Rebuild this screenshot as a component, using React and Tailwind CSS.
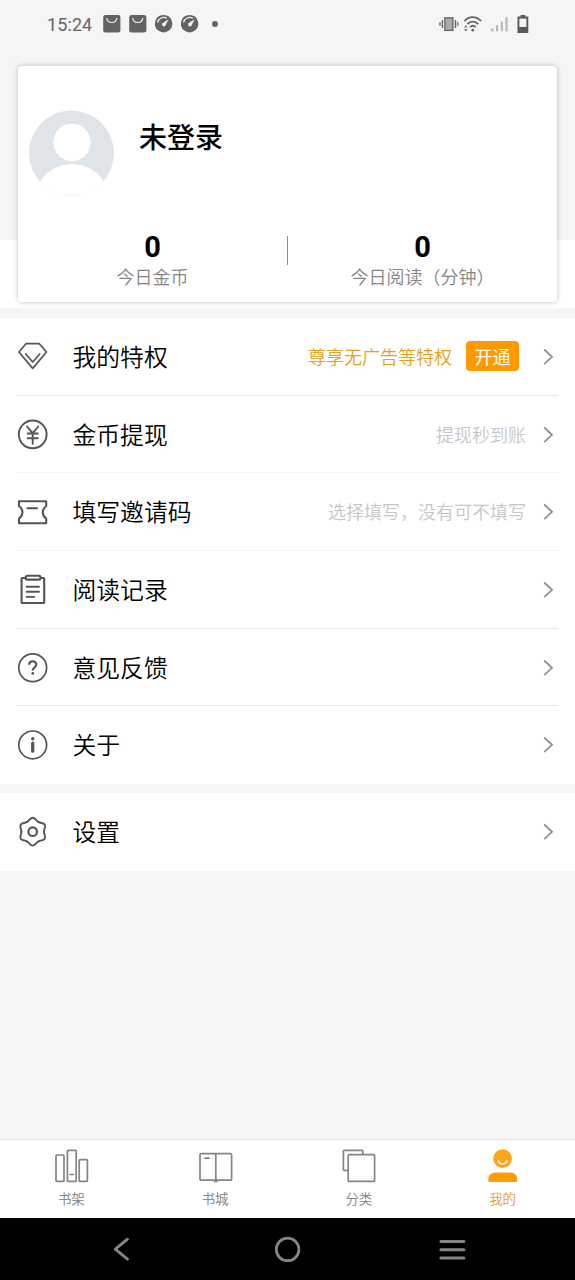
import clsx from "clsx";

const menuItems = [
    { label: "我的特权", icon: <DiamondIcon />, promo: "尊享无广告等特权", action: "开通" },
    { label: "金币提现", icon: <YenIcon />, hint: "提现秒到账", faint: true },
    { label: "填写邀请码", icon: <TicketIcon />, hint: "选择填写，没有可不填写", faint: true },
    { label: "阅读记录", icon: <ClipboardIcon /> },
    { label: "意见反馈", icon: <QuestionIcon /> },
    { label: "关于", icon: <InfoIcon /> },
];

const tabs = [
    { label: "书架", icon: <ShelfIcon /> },
    { label: "书城", icon: <BookIcon /> },
    { label: "分类", icon: <CategoryIcon /> },
    { label: "我的", icon: <MeIcon />, active: true },
];

/* Menu icons, all on a 32px box */
function MenuSvg({ children }) {
    return (
        <svg className="h-8 w-8 shrink-0" viewBox="0 0 32 32" fill="none" stroke="#555" strokeWidth="1.9" strokeLinejoin="round" strokeLinecap="round">
            {children}
        </svg>
    );
}

function DiamondIcon() {
    return (
        <MenuSvg>
            <path d="M9 2.7H22.3L29.5 11L15.7 27.4L1.9 11Z" strokeWidth="1.7" />
            <path d="M8.7 13L15.7 21L22.7 13" strokeWidth="1.7" />
        </MenuSvg>
    );
}

function YenIcon() {
    return (
        <MenuSvg>
            <circle cx="15.7" cy="15.4" r="13.9" />
            <path d="M10 7.5L15.7 14.2L21.4 7.5M15.7 14.2V24.7M10.7 14.5H20.9M10.7 19.2H20.9" />
        </MenuSvg>
    );
}

function TicketIcon() {
    return (
        <MenuSvg>
            <path d="M2 5.2H29.2V10C24.6 13.2 24.6 19.4 29.2 22.6V27.2H2V22.6C6.6 19.4 6.6 13.2 2 10Z" strokeWidth="2.1" />
            <path d="M10.4 12.3H20" strokeWidth="2.1" />
        </MenuSvg>
    );
}

function ClipboardIcon() {
    return (
        <MenuSvg>
            <path d="M8.7 4H5.4Q4.6 4 4.6 4.8V28.2Q4.6 29 5.4 29H26.4Q27.2 29 27.2 28.2V4.8Q27.2 4 26.4 4H23.5" strokeWidth="2.1" />
            <rect x="8.7" y="1.8" width="14.8" height="3.8" rx="1.6" strokeWidth="2.1" />
            <path d="M9.6 12.7H22M9.6 17.7H22M9.6 22.9H17.3" />
        </MenuSvg>
    );
}

function QuestionIcon() {
    return (
        <MenuSvg>
            <circle cx="15.7" cy="15.7" r="13.9" strokeWidth="1.7" />
            <path d="M12.1 12.8C12.1 8.2 19.3 8.2 19.3 12.6C19.3 15.2 15.8 15.4 15.8 18.6" strokeWidth="2.1" strokeLinecap="butt" />
            <circle cx="15.8" cy="21.4" r="1.4" fill="#555" stroke="none" />
        </MenuSvg>
    );
}

function InfoIcon() {
    return (
        <MenuSvg>
            <circle cx="15.7" cy="15.9" r="13.9" strokeWidth="1.7" />
            <circle cx="15.7" cy="9.8" r="1.7" fill="#555" stroke="none" />
            <path d="M15.7 14V22.2" strokeWidth="3.2" />
        </MenuSvg>
    );
}

function GearIcon() {
    return (
        <MenuSvg>
            {[0, 60, 120, 180, 240, 300].map((angle) => (
                <path key={angle} d="M10.05 5.9C12.7 4.4 13.2 1.8 15.7 1.8S18.7 4.4 21.35 5.9" transform={`rotate(${angle} 15.7 15.7)`} />
            ))}
            <circle cx="15.7" cy="15.7" r="4.3" strokeWidth="2.2" />
        </MenuSvg>
    );
}

/* Tab icons, 36px box */
function TabSvg({ children }) {
    return (
        <svg className="h-9 w-9" viewBox="0 0 36 36" fill="none" stroke="#858585" strokeWidth="1.7" strokeLinejoin="round" strokeLinecap="round">
            {children}
        </svg>
    );
}

function ShelfIcon() {
    return (
        <TabSvg>
            <rect x="2" y="7" width="8" height="26.4" rx="1" />
            <rect x="13.4" y="2.3" width="8.8" height="31.1" rx="1" />
            <rect x="25.2" y="11.6" width="8.2" height="21.8" rx="1" />
            <path d="M16 26.5H19.6" />
        </TabSvg>
    );
}

function BookIcon() {
    return (
        <TabSvg>
            <rect x="2" y="5.7" width="31.6" height="26.5" rx="1" />
            <path d="M17.8 6V33.2M7 10.2H11" />
            <path d="M16.6 33.4H19" />
        </TabSvg>
    );
}

function CategoryIcon() {
    return (
        <TabSvg>
            <path d="M6.6 22.3H3.4Q2.4 22.3 2.4 21.3V3.3Q2.4 2.3 3.4 2.3H20.8Q21.8 2.3 21.8 3.3V6" />
            <rect x="7.2" y="6.7" width="26.4" height="26.7" rx="1" />
        </TabSvg>
    );
}

function MeIcon() {
    return (
        <TabSvg>
            <circle cx="17.6" cy="10.6" r="9.3" fill="#fba41c" stroke="none" />
            <path d="M13.4 12.7C14.8 17 20.6 17 22 12.7" stroke="#fff" strokeWidth="1.5" />
            <path d="M3.4 34V31.8Q3.4 24.6 11 24.6H24.8Q32.2 24.6 32.2 31.8V34Z" fill="#ff9b09" stroke="none" />
        </TabSvg>
    );
}

function Chevron() {
    return (
        <svg className="ml-[17px] h-5 w-[11px] shrink-0" viewBox="0 0 11 20" fill="none" stroke="#929292" strokeWidth="1.8">
            <path d="M1.2 2.5L9 9.8L1.2 17.1" />
        </svg>
    );
}

function BagIcon() {
    return (
        <svg className="h-[18px] w-[18px]" viewBox="0 0 18 18" fill="none">
            <rect x="0.2" y="0" width="17.2" height="17.6" rx="2.4" fill="#636363" />
            <path d="M3.8 3C4.4 9 13.2 9 13.8 3" stroke="#f5f5f5" strokeWidth="1.2" />
        </svg>
    );
}

function GaugeIcon() {
    return (
        <svg className="h-[18px] w-[18px]" viewBox="0 0 18 18" fill="none">
            <path d="M8.6 0A8.7 8.7 0 0 1 13.1 16.1Q8.6 18.8 4.1 16.1A8.7 8.7 0 0 1 8.6 0Z" fill="#636363" />
            <path d="M2.6 7.6A6.3 6.3 0 0 1 11.8 3.1" stroke="#f5f5f5" strokeWidth="1.2" />
            <path d="M13.6 4.2L10.2 11A2 2 0 0 1 7.2 8.6Z" fill="#f5f5f5" />
        </svg>
    );
}

function StatusBar() {
    return (
        <div className="flex h-12 items-center pl-[47px] pr-[46px]">
            <span className="w-[55.5px] text-[18px] tracking-[0.1px] text-[#666] font-[Roboto,sans-serif]">15:24</span>
            <div className="flex items-center gap-2">
                <BagIcon />
                <BagIcon />
                <GaugeIcon />
                <GaugeIcon />
            </div>
            <span className="ml-[13.5px] h-[6px] w-[6px] rounded-full bg-[#636363]" />

            <div className="ml-auto flex items-center pb-px">
                {/* vibrate */}
                <svg className="h-5 w-5" viewBox="0 0 20 20" fill="none" stroke="#666">
                    <rect x="5.8" y="3.8" width="8.2" height="12.6" fill="#aaa" strokeWidth="1.3" />
                    <path d="M3.4 6V14M16.5 6V14" strokeWidth="1.4" />
                    <path d="M1 8V12M18.9 8V12" strokeWidth="1.2" />
                </svg>
                {/* wifi */}
                <svg className="ml-[3.5px] h-5 w-5" viewBox="0 0 20 20" fill="none" stroke="#666">
                    <path d="M1.4 7.2C6 1.8 13.4 1.8 18 7.2" strokeWidth="1.9" />
                    <path d="M4.4 10.2C7.4 6.8 12 6.8 15.2 10.2" strokeWidth="1.9" />
                    <path d="M7 13.2C8.6 11.6 11 11.6 12.7 13.2" strokeWidth="1.8" />
                    <circle cx="9.8" cy="16.2" r="1.4" fill="#666" stroke="none" />
                    <path d="M1 13.6L2.8 11.2L4.6 13.6ZM1 15.2L2.8 17.6L4.6 15.2Z" fill="#666" stroke="none" />
                </svg>
                {/* signal */}
                <svg className="ml-[8px] h-5 w-[17px]" viewBox="0 0 17 20" fill="#b8b8b8">
                    <path d="M0.2 14.6h2.3v2.6h-2.3zM5 10.9h2.1v6.3h-2.1zM9.8 7.4h2.1v9.8h-2.1zM14.4 3.2h2.2v14h-2.2z" />
                </svg>
                {/* battery */}
                <svg className="mr-[0.5px] ml-[9px] h-5 w-3" viewBox="0 0 12 20">
                    <path d="M3.6 1H8.4V2.6H11.3V19H0.5V2.6H3.6Z" fill="#5a5a5a" />
                    <rect x="2.4" y="4.6" width="7" height="8.4" fill="#f5f5f5" />
                </svg>
            </div>
        </div>
    );
}

function Stat({ value, label }) {
    return (
        <div className="flex flex-1 flex-col items-center">
            <span className="h-[29px] text-[29px] leading-[31px] font-bold font-[Roboto,sans-serif]">{value}</span>
            <span className="text-[18px] leading-[30px] text-[#858585] font-[350]">{label}</span>
        </div>
    );
}

function ProfileCard() {
    return (
        <div className="mx-[18px] mt-[18px] flex h-[236px] flex-col rounded-[4px] bg-white shadow-[0_0_5px_rgba(0,0,0,0.25)]">
            <div className="flex flex-1 items-start pl-[11px] pt-11">
                <svg className="h-[86px] w-[86px]" viewBox="0 0 86 86">
                    <defs>
                        <clipPath id="avatar">
                            <circle cx="42.5" cy="43" r="42.5" />
                        </clipPath>
                    </defs>
                    <g clipPath="url(#avatar)">
                        <rect width="86" height="86" fill="#dfe4e8" />
                        <circle cx="43" cy="32.5" r="18.7" fill="#fff" />
                        <path d="M8 78C20 46 66 46 78 78L70 84.5H16Z" fill="#fff" />
                        <rect y="71.5" width="86" height="13" fill="#fff" />
                    </g>
                </svg>
                <span className="ml-[24px] mt-[6px] text-[28px] leading-10 font-medium">未登录</span>
            </div>
            <div className="flex h-[70px] items-start">
                <Stat value="0" label="今日金币" />
                <span className="mt-[4px] h-[29px] w-px bg-[#8a8a8a]" />
                <Stat value="0" label="今日阅读（分钟）" />
            </div>
        </div>
    );
}

function MenuRow({ item, last }) {
    return (
        <div className="relative flex flex-1 items-center pl-[17px] pr-[21px]">
            {item.icon}
            <span className="ml-[23.5px] pb-[2px] text-[23.8px] leading-8 font-[350]">{item.label}</span>
            <div className="ml-auto flex items-center">
                {item.promo && <span className="pb-px text-[18px] font-[350] text-[#e8a018]">{item.promo}</span>}
                {item.action && (
                    <button className="ml-[14px] mr-[7px] mb-px h-[30px] w-[53px] rounded-[4px] bg-[#ff9900] text-[18px] leading-[29px] text-white">
                        {item.action}
                    </button>
                )}
                {item.hint && <span className="pb-px text-[18px] font-[350] text-[#c6c6c6]">{item.hint}</span>}
                <Chevron />
            </div>
            {!last && (
                <span className={clsx("absolute bottom-0 left-[17px] right-[17px] h-px", item.faint ? "bg-[#f3f3f3]" : "bg-[#e6e6e6]")} />
            )}
        </div>
    );
}

export default function App() {
    return (
        <div className="flex h-[1280px] w-[575px] flex-col overflow-hidden bg-[#f5f5f5] text-black font-['Noto_Sans_CJK_SC',sans-serif]">
            <div className="h-[308px] shrink-0 bg-[linear-gradient(#f5f5f5_240px,#fff_240px)]">
                <StatusBar />
                <ProfileCard />
            </div>

            {/* Menu */}
            <div className="mt-[10px] flex h-[466px] shrink-0 flex-col bg-white">
                {menuItems.map((item, idx) => (
                    <MenuRow key={item.label} item={item} last={idx === menuItems.length - 1} />
                ))}
            </div>
            <div className="mt-[9px] flex h-[78px] shrink-0 flex-col bg-white">
                <MenuRow item={{ label: "设置", icon: <GearIcon /> }} last />
            </div>

            {/* Tabs */}
            <div className="mt-auto flex h-[79px] shrink-0 border-t border-[#e2e2e2] bg-white">
                {tabs.map((tab) => (
                    <div key={tab.label} className="flex flex-1 flex-col items-center pt-2">
                        {tab.icon}
                        <span className={clsx("mt-[4px] mr-px text-[13.5px] leading-5 font-[350]", tab.active ? "text-[#e8a018]" : "text-[#808080]")}>{tab.label}</span>
                    </div>
                ))}
            </div>

            {/* System navigation */}
            <div className="flex h-[62px] shrink-0 items-center justify-between bg-black pl-[106px] pr-[107px]">
                <svg className="h-8 w-8" viewBox="0 0 32 32" fill="none" stroke="#858585" strokeWidth="2.8" strokeLinecap="round" strokeLinejoin="round">
                    <path d="M21.5 6.2L9.3 16.2L21.5 26.2" />
                </svg>
                <svg className="h-8 w-8" viewBox="0 0 32 32" fill="none" stroke="#858585" strokeWidth="2.8">
                    <circle cx="16.6" cy="16.4" r="11.3" />
                </svg>
                <svg className="h-8 w-8" viewBox="0 0 32 32" fill="none" stroke="#858585" strokeWidth="3" strokeLinecap="round">
                    <path d="M4.9 8.4H27.9M4.9 16.7H27.9M4.9 25H27.9" />
                </svg>
            </div>
        </div>
    );
}
